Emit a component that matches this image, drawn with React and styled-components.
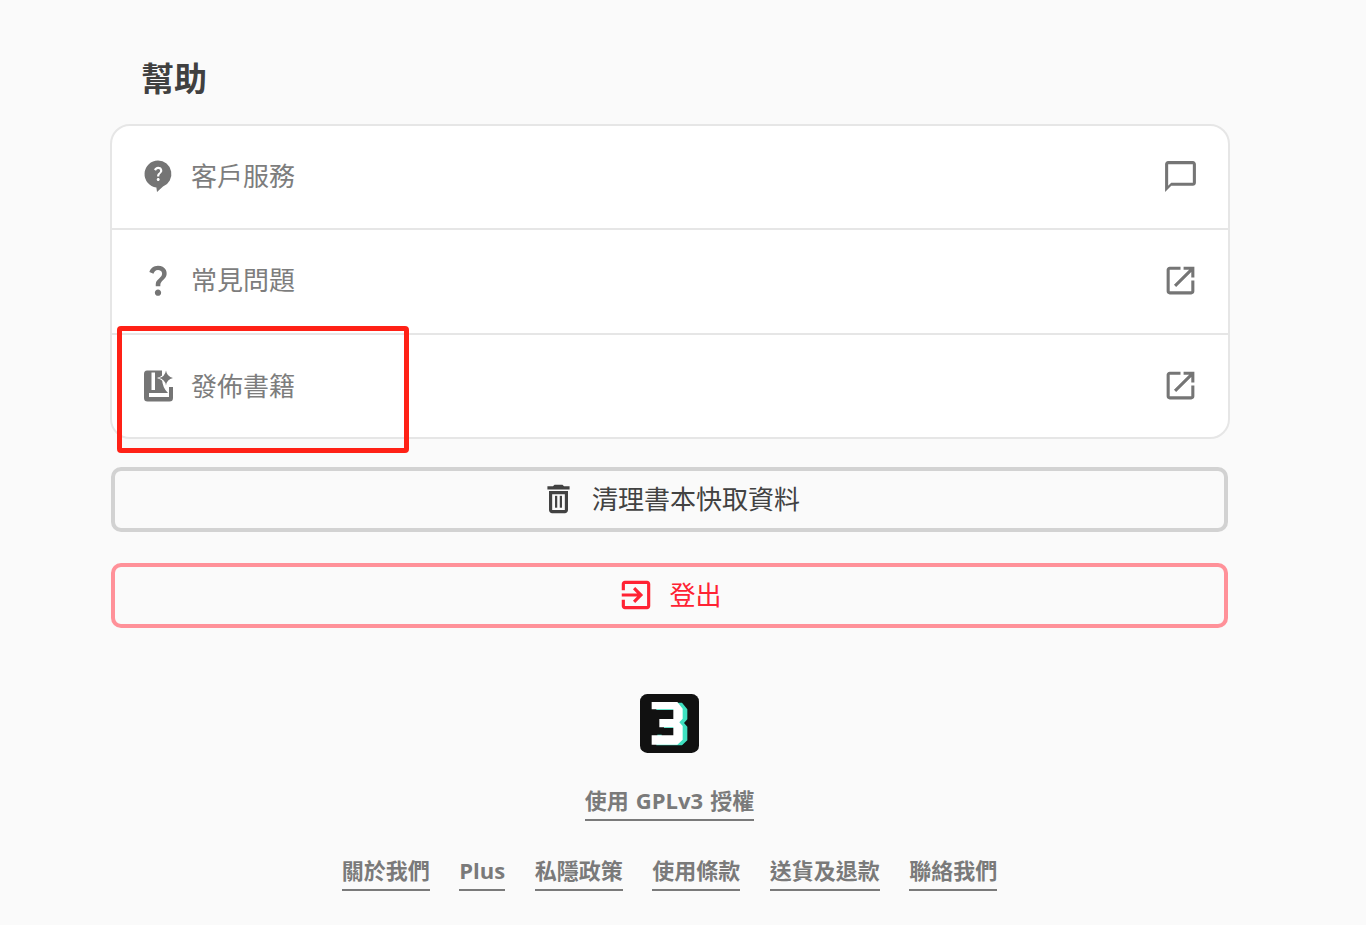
import React from "react";
import styled, { createGlobalStyle } from "styled-components";

const GlobalStyle = createGlobalStyle`
  html, body {
    margin: 0;
    padding: 0;
    background-color: #fafafa;
    font-family: "Open Sans", "Noto Sans CJK TC", sans-serif;
  }
`;

const Page = styled.div`
  position: relative;
  box-sizing: border-box;
  width: 1366px;
  height: 925px;
  overflow: hidden;
  padding: 56px 136px 0 110px;
`;

const Title = styled.h1`
  margin: 0 0 22px 31px;
  font-size: 33px;
  line-height: 46px;
  font-weight: 700;
  color: #404040;
`;

const Card = styled.div`
  border: 2px solid #e6e6e6;
  border-radius: 20px;
  background-color: #fff;
  overflow: hidden;
`;

const Row = styled.div`
  display: flex;
  align-items: center;
  box-sizing: border-box;
  height: 104.5px;
  padding: 0 29px 2px 30px;
  & + & {
    border-top: 2px solid #e6e6e6;
  }
  &:first-child {
    height: 102px;
  }
  &:last-child {
    height: 104px;
    padding-bottom: 0;
  }
`;

const LeadIcon = styled.div`
  display: flex;
  justify-content: center;
  flex: 0 0 32px;
  min-width: 0;
  margin-right: 17px;
  color: #757575;
`;

const Label = styled.span`
  flex: 1;
  font-size: 26px;
  line-height: 38px;
  color: #7d7d7d;
`;

const Icon = styled.svg`
  display: block;
  flex-shrink: 0;
  fill: currentColor;
`;

const TrailIcon = styled.div`
  color: #757575;
`;

const Actions = styled.div`
  display: flex;
  flex-direction: column;
  gap: 31px;
  margin: 28px 2px 0 1px;
`;

const ActionButton = styled.div`
  display: flex;
  justify-content: center;
  align-items: center;
  gap: 14px;
  box-sizing: border-box;
  height: 65px;
  border: 4px solid ${(p) => (p.$danger ? "#ff9199" : "#d2d2d2")};
  border-radius: 10px;
  font-size: 26px;
  line-height: 38px;
  color: ${(p) => (p.$danger ? "#ff2233" : "#424242")};
`;

const Footer = styled.div`
  display: flex;
  flex-direction: column;
  align-items: center;
  margin-top: 66px;
  width: 1119px;
`;

const License = styled.span`
  margin-top: 31px;
  padding-bottom: 2px;
  border-bottom: 2px solid #7a7a7a;
  font-size: 22px;
  line-height: 33px;
  font-weight: 700;
  word-spacing: 1.5px;
  color: #7a7a7a;
`;

const Links = styled.div`
  display: flex;
  gap: 29.5px;
  margin-top: 33px;
`;

const FootLink = styled.span`
  padding-bottom: 2px;
  border-bottom: 2px solid #7a7a7a;
  font-size: 22px;
  line-height: 33px;
  font-weight: 700;
  color: #7a7a7a;
`;

const Highlight = styled.div`
  position: absolute;
  left: 117px;
  top: 326px;
  box-sizing: border-box;
  width: 292px;
  height: 127px;
  border: 5px solid #ff2116;
  border-radius: 4px;
`;

const ChatIcon = () => (
  <Icon width="37" height="37" viewBox="0 0 24 24">
    <path d="M20 2H4c-1.1 0-2 .9-2 2v18l4-4h14c1.1 0 2-.9 2-2V4c0-1.1-.9-2-2-2zm0 14H6l-2 2V4h16v12z" />
  </Icon>
);

const OpenIcon = () => (
  <Icon width="37" height="37" viewBox="0 0 24 24">
    <path d="M19 19H5V5h7V3H5c-1.11 0-2 .9-2 2v14c0 1.1.89 2 2 2h14c1.1 0 2-.9 2-2v-7h-2v7zM14 3v2h3.59l-9.83 9.83 1.41 1.41L19 6.41V10h2V3h-7z" />
  </Icon>
);

const QUESTION =
  "M11.07 12.85c.77-1.39 2.25-2.21 3.11-3.44.91-1.29.4-3.7-2.18-3.7-1.69 0-2.52 1.28-2.87 2.34L6.54 6.96C7.25 4.83 9.18 3 11.99 3c2.35 0 3.96 1.07 4.78 2.41.7 1.15 1.11 3.3.03 4.9-1.2 1.77-2.35 2.31-2.97 3.45-.25.46-.35.76-.35 2.24h-2.89c-.01-.78-.13-2.05.48-3.15zM14 20c0 1.1-.9 2-2 2s-2-.9-2-2 .9-2 2-2 2 .9 2 2z";

const BubbleIcon = () => (
  <Icon width="32" height="32" viewBox="0 0 32 32">
    <path d="M16 0.5a13.5 13.5 0 0 1 5 26l-6 5.5-0.6-4.6A13.5 13.5 0 0 1 16 0.5z" />
    <path fill="#fff" transform="translate(7.2 4.6) scale(.75)" d={QUESTION} />
  </Icon>
);

const MarkIcon = () => (
  <Icon width="38" height="38" viewBox="0 0 24 24">
    <path d={QUESTION} />
  </Icon>
);

const PublishIcon = () => (
  <Icon width="30" height="32" viewBox="-1 0 30 32">
    <path
      fillRule="evenodd"
      d="M3 .5H18V9Q18.5 18 24 23H5V27H25V17H29V28Q29 31.5 25.5 31.5H3.5Q0 31.5 0 28V4Q0 .5 3 .5ZM7.5 2.5V20H11V2.5Z"
    />
    <path fill="#fff" d="M22 -1.5Q23 6 31 8Q23 10 22 18Q21 10 13 8Q21 6 22 -1.5Z" />
    <path d="M22 .5Q23 7 29.5 8Q23 9 22 15.5Q21 9 14.5 8Q21 7 22 .5Z" />
  </Icon>
);

const TrashIcon = () => (
  <Icon width="39" height="38" viewBox="0 0 24 24">
    <path d="M16 9v10H8V9h8m-1.5-6h-5l-1 1H5v2h14V4h-3.5l-1-1zM18 7H6v12c0 1.1.9 2 2 2h8c1.1 0 2-.9 2-2V7z" />
    <rect x="9.8" y="10" width="1.4" height="7.5" />
    <rect x="12.8" y="10" width="1.4" height="7.5" />
  </Icon>
);

const ExitIcon = () => (
  <Icon width="38" height="38" viewBox="0 0 24 24">
    <path d="M10.09 15.59L11.5 17l5-5-5-5-1.41 1.41L12.67 11H3v2h9.67l-2.58 2.59zM19 3H5c-1.11 0-2 .9-2 2v4h2V5h14v14H5v-4H3v4c0 1.1.89 2 2 2h14c1.1 0 2-.9 2-2V5c0-1.1-.9-2-2-2z" />
  </Icon>
);

const THREE =
  "M95 52H172L188 72V102L178 113L188 124V165L172 180H95V152H160V128H118V103H160V74H95Z";

const Logo = () => (
  <svg width="59" height="59" viewBox="60 28 177 177">
    <rect x="60" y="28" width="177" height="177" rx="22" fill="#111" />
    <path d={THREE} fill="#3fe0c0" transform="translate(14 2)" />
    <path d="M112 150H125V160H112Z" fill="#3fe0c0" />
    <path d={THREE} fill="#fff" />
  </svg>
);

const rows = [
  { label: "客戶服務", lead: <BubbleIcon />, trail: <ChatIcon /> },
  { label: "常見問題", lead: <MarkIcon />, trail: <OpenIcon /> },
  { label: "發佈書籍", lead: <PublishIcon />, trail: <OpenIcon /> },
];

const links = ["關於我們", "Plus", "私隱政策", "使用條款", "送貨及退款", "聯絡我們"];

const App = () => {
  return (
    <Page>
      <GlobalStyle />
      <Title>幫助</Title>
      <Card>
        {rows.map((row) => (
          <Row key={row.label}>
            <LeadIcon>{row.lead}</LeadIcon>
            <Label>{row.label}</Label>
            <TrailIcon>{row.trail}</TrailIcon>
          </Row>
        ))}
      </Card>
      <Actions>
        <ActionButton>
          <TrashIcon />
          清理書本快取資料
        </ActionButton>
        <ActionButton $danger>
          <ExitIcon />
          登出
        </ActionButton>
      </Actions>
      <Footer>
        <Logo />
        <License>使用 GPLv3 授權</License>
        <Links>
          {links.map((link) => (
            <FootLink key={link}>{link}</FootLink>
          ))}
        </Links>
      </Footer>
      <Highlight />
    </Page>
  );
};

export default App;
